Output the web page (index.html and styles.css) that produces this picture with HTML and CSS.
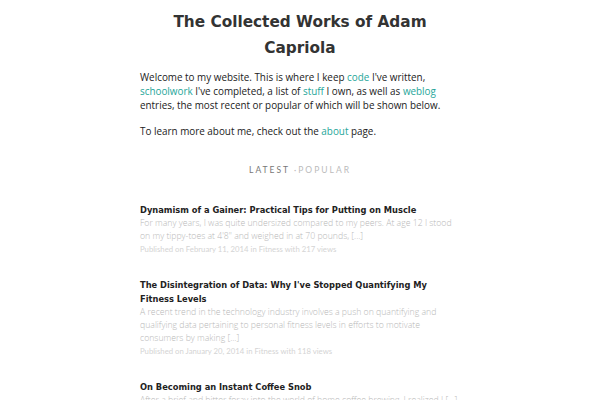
FILE: index.html
```html
<!DOCTYPE html>
<html>
<head>
<meta charset="utf-8">
<link rel="stylesheet" href="styles.css">
</head>
<body>
<div class="page">
  <h1 class="site-title">The Collected Works of Adam Capriola</h1>
  <p class="intro">Welcome to my website. This is where I keep <a href="#">code</a> I've written, <a href="#">schoolwork</a> I've completed, a list of <a href="#">stuff</a> I own, as well as <a href="#">weblog</a> entries, the most recent or popular of which will be shown below.</p>
  <p class="intro">To learn more about me, check out the <a href="#">about</a> page.</p>
  <div class="tabs"><span class="tab active">LATEST</span> <span class="tab">·POPULAR</span></div>
  <div class="post">
    <h2 class="post-title">Dynamism of a Gainer: Practical Tips for Putting on Muscle</h2>
    <p class="excerpt">For many years, I was quite undersized compared to my peers. At age 12 I stood on my tippy-toes at 4'8" and weighed in at 70 pounds, [...]</p>
    <p class="meta">Published on February 11, 2014 in Fitness with 217 views</p>
  </div>
  <div class="post">
    <h2 class="post-title">The Disintegration of Data: Why I've Stopped Quantifying My Fitness Levels</h2>
    <p class="excerpt">A recent trend in the technology industry involves a push on quantifying and qualifying data pertaining to personal fitness levels in efforts to motivate consumers by making [...]</p>
    <p class="meta">Published on January 20, 2014 in Fitness with 118 views</p>
  </div>
  <div class="post">
    <h2 class="post-title">On Becoming an Instant Coffee Snob</h2>
    <p class="excerpt">After a brief and bitter foray into the world of home coffee brewing, I realized I [...]</p>
    <p class="meta">Published on January 2, 2014 in Food with 98 views</p>
  </div>
</div>
</body>
</html>
```
FILE: styles.css
```css
html, body { margin: 0; padding: 0; background: #fff; }
body { font-family: "Open Sans", Lato, sans-serif; color: #222; }
.page { width: 320px; margin: 0 auto; padding-top: 9px; }
.site-title {
  font-family: "DejaVu Sans", sans-serif;
  font-weight: bold;
  font-size: 15.3px;
  line-height: 26px;
  color: #333;
  text-align: center;
  margin: 0 0 9px;
}
.intro { font-size: 9.9px; line-height: 14px; margin: 0 0 12px; }
.intro a { color: #26a69a; text-decoration: none; }
.tabs {
  font-family: Lato, sans-serif;
  text-align: center;
  font-size: 8.5px;
  letter-spacing: 2px;
  margin: 26px 0 27px;
  line-height: 12px;
}
.tab { color: #bbb; }
.tab.active { color: #777; }
.post { margin-bottom: 23px; }
.post-title {
  font-family: "DejaVu Sans", sans-serif;
  font-weight: bold;
  font-size: 8.3px;
  line-height: 14px;
  color: #222;
  margin: 0;
}
.excerpt { font-size: 8.7px; line-height: 13px; color: #b8b8b8; margin: 0; font-weight: 300; }
.meta { font-size: 7.75px; line-height: 12px; color: #d4d4d4; margin: 0; font-family: Lato, sans-serif; }
```
